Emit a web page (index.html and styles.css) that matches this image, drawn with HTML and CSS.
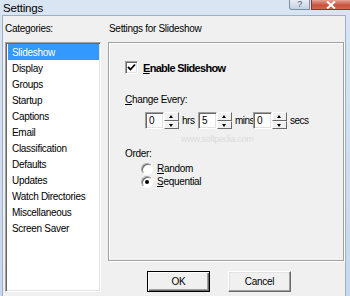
FILE: index.html
```html
<!DOCTYPE html>
<html lang="en">
<head>
  <meta charset="UTF-8">
  <title>Settings</title>
  <link rel="stylesheet" href="styles.css">
</head>
<body>

<div class="window">
  <div class="titlebar">
    <span class="title">Settings</span>
    <div class="caption-btns">
      <span class="help">?</span>
      <span class="close">
        <svg width="12" height="8" viewBox="0 0 12 8"><path d="M2 0.5 L10 7.5 M10 0.5 L2 7.5" stroke="#fff" stroke-width="2"/></svg>
      </span>
    </div>
  </div>

  <div class="client">
    <!-- Categories -->
    <div class="left">
      <div class="label">Categories:</div>
      <ul class="listbox">
        <li class="sel">Slideshow</li>
        <li>Display</li>
        <li>Groups</li>
        <li>Startup</li>
        <li>Captions</li>
        <li>Email</li>
        <li>Classification</li>
        <li>Defaults</li>
        <li>Updates</li>
        <li>Watch Directories</li>
        <li>Miscellaneous</li>
        <li>Screen Saver</li>
      </ul>
    </div>

    <!-- Settings panel -->
    <div class="right">
      <div class="label">Settings for Slideshow</div>
      <div class="panel">
        <div class="check-row">
          <span class="checkbox">
            <svg width="9" height="9" viewBox="0 0 9 9"><path d="M1 4 L3.5 6.5 L8 1.5" fill="none" stroke="#000" stroke-width="1.8"/></svg>
          </span>
          <span class="check-text"><u>E</u>nable Slideshow</span>
        </div>

        <div class="field-label change"><u>C</u>hange Every:</div>
        <div class="spin-row">
          <span class="edit">0</span>
          <span class="spin"><span class="up"></span><span class="down"></span></span>
          <span class="unit hrs">hrs</span>
          <span class="edit">5</span>
          <span class="spin"><span class="up"></span><span class="down"></span></span>
          <span class="unit mins">mins</span>
          <span class="edit">0</span>
          <span class="spin"><span class="up"></span><span class="down"></span></span>
          <span class="unit">secs</span>
        </div>

        <div class="field-label order">Order:</div>
        <div class="radio-row"><span class="radio"></span><span><u>R</u>andom</span></div>
        <div class="radio-row"><span class="radio on"></span><span><u>S</u>equential</span></div>

        <div class="watermark">www.softpedia.com</div>
      </div>
      <div class="buttons">
        <span class="btn default">OK</span>
        <span class="btn">Cancel</span>
      </div>
    </div>
  </div>
</div>

</body>
</html>
```

FILE: styles.css
```css
body {
  margin: 0;
  font-family: "Liberation Sans", Arial, sans-serif;
  font-size: 10px;
  letter-spacing: -0.3px;
  color: #000;
}
.window {
  width: 350px; height: 296px;
  background: linear-gradient(#d9e5f3, #c7d8ec);
  display: flex; flex-direction: column;
  overflow: hidden;
}
.titlebar {
  height: 16px; display: flex; align-items: flex-start;
}
.title {
  font-size: 11.5px; letter-spacing: -0.2px;
  padding: 2px 0 0 3px; line-height: 13px;
}
.caption-btns { margin-left: auto; display: flex; }
.help {
  width: 19px; height: 9px; margin-right: 1px;
  border: 1px solid #7d8ea4; border-top: none; border-radius: 0 0 0 3px;
  background: linear-gradient(#e6edf5, #c5d1df);
  color: #4c5a6c; font-size: 9px; line-height: 8px; text-align: center;
}
.close {
  width: 38px; height: 9px;
  border: 1px solid #7a3a30; border-top: none; border-right: none;
  background: linear-gradient(#e2a394, #c9503c 60%, #d06a4e);
  display: flex; justify-content: center; align-items: center;
}
.client {
  flex: 1;
  margin: 0 4px 3px 2px;
  border: 1px solid #9eb0c6;
  background: #f0f0f0;
  display: flex;
  padding: 0 1px 9px 2px;
}
.label { height: 20px; line-height: 13px; padding-top: 6px; }
.left { width: 96px; display: flex; flex-direction: column; }
.listbox {
  flex: 1; margin: 0; padding: 1px; list-style: none;
  background: #fff;
  border: 1px solid; border-color: #a0a0a0 #fff #fff #a0a0a0;
  box-shadow: inset 1px 1px 0 #696969, inset -1px -1px 0 #e3e3e3;
}
.listbox li { height: 16px; line-height: 17px; padding-left: 4px; margin-left: 1px; }
.listbox li.sel { background: #3399ff; color: #fff; }

.right { width: 236px; margin-left: 7px; display: flex; flex-direction: column; }
.right .label { padding-left: 1px; }
.panel {
  position: relative;
  height: 217px;
  border: 1px solid #a0a0a0;
  box-shadow: 1px 1px 0 #fff, inset 1px 1px 0 #fff;
  padding-left: 16px;
}
.check-row { display: flex; align-items: center; margin-top: 18px; height: 13px; }
.checkbox, .edit {
  background: #fff;
  border: 1px solid; border-color: #a0a0a0 #fff #fff #a0a0a0;
  box-shadow: inset 1px 1px 0 #696969, inset -1px -1px 0 #e3e3e3;
}
.checkbox {
  width: 11px; height: 11px;
  display: flex; align-items: center; justify-content: center;
}
.check-text { font-weight: bold; font-size: 11px; letter-spacing: -0.7px; margin-left: 5px; }
.field-label { height: 13px; line-height: 13px; }
.change { margin-top: 19px; }
.spin-row { display: flex; align-items: center; margin: 6px 0 0 20px; height: 17px; }
.edit { width: 14px; height: 15px; line-height: 15px; padding-left: 3px; }
.spin { width: 15px; height: 17px; display: flex; flex-direction: column; }
.spin span {
  flex: 1; position: relative; background: #f0f0f0;
  border: 1px solid; border-color: #fff #696969 #696969 #fff;
}
.spin .up::after, .spin .down::after {
  content: ""; position: absolute; left: 4px; top: 2px;
  border-left: 2.5px solid transparent; border-right: 2.5px solid transparent;
}
.spin .up::after { border-bottom: 3px solid #000; }
.spin .down::after { border-top: 3px solid #000; }
.unit { padding-left: 3px; letter-spacing: -0.5px; }
.unit.hrs { width: 16px; }
.unit.mins { width: 18px; }
.order { margin-top: 18px; }
.radio-row { display: flex; align-items: center; height: 13px; margin-left: 16px; }
.order + .radio-row { margin-top: 2px; }
.radio {
  width: 10px; height: 10px; border-radius: 50%;
  background: #fff; margin-right: 4px;
  border: 1px solid; border-color: #a0a0a0 #fff #fff #a0a0a0;
  box-shadow: inset 1px 1px 0 #696969;
  display: flex; align-items: center; justify-content: center;
}
.radio.on::after { content: ""; width: 4px; height: 4px; border-radius: 50%; background: #000; }
.watermark {
  position: absolute; left: 72px; top: 91px;
  color: #dcdcdc; font-size: 9px;
}
.buttons { display: flex; gap: 18px; margin-top: 10px; padding-left: 39px; }
.btn {
  width: 61px; height: 19px; line-height: 19px; text-align: center;
  background: #f0f0f0;
  border: 1px solid; border-color: #fff #696969 #696969 #fff;
  box-shadow: inset -1px -1px 0 #a0a0a0, inset 1px 1px 0 #e3e3e3;
}
.btn.default {
  border-color: #000;
  box-shadow: inset 1px 1px 0 #fff, inset -1px -1px 0 #696969, inset -2px -2px 0 #a0a0a0;
}
```
